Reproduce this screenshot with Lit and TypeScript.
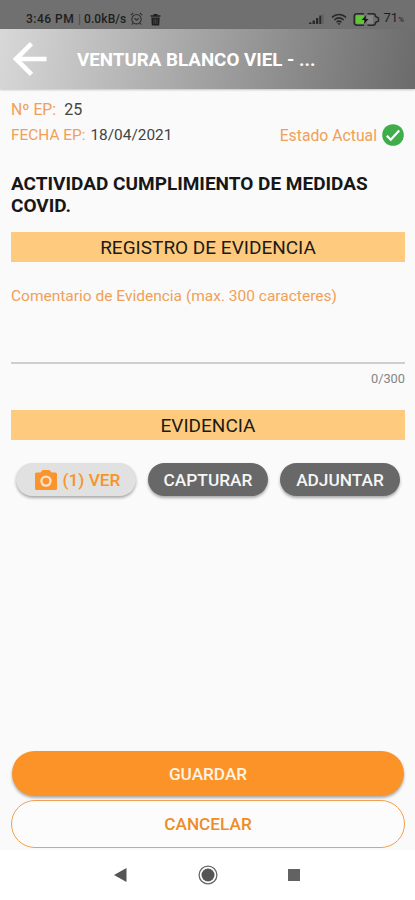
import { LitElement, html, css } from "lit";
import { customElement, property } from "lit/decorators.js";

@customElement("section-banner")
class SectionBanner extends LitElement {
  static styles = css`
    :host { display: block; height: 30px; background: #fecb7e; color: #1c1a17; text-align: center;
      font: 400 19px/31px Roboto, sans-serif; }
  `;
  render() { return html`<slot></slot>`; }
}

@customElement("pill-button")
class PillButton extends LitElement {
  @property({ reflect: true }) variant = "dark";
  static styles = css`
    :host { display: block; }
    button { display: flex; align-items: center; justify-content: center; gap: 6px; width: 100%; height: 33px;
      box-sizing: border-box; padding: 0; border: 0; border-radius: 25px; background: #686868; color: #f6f6f6;
      font: 500 17.3px/20px Roboto, sans-serif; white-space: nowrap; box-shadow: 0 2px 3px rgba(0,0,0,.32); }
    :host([variant="light"]) button { background: #e1e1e1; color: #f7942a; padding-left: 3px; }
    :host([variant="primary"]) button { height: 45px; background: #fc9328; color: #fff3e2; font-size: 17.2px; }
    :host([variant="outline"]) button { height: 48px; background: #fcfcfc; color: #ec8d2b; font-size: 17.2px;
      border: 1px solid #f0a050; box-shadow: none; }
  `;
  render() { return html`<button><slot></slot></button>`; }
}

@customElement("app-root")
class AppRoot extends LitElement {
  static styles = css`
    :host { display: flex; flex-direction: column; width: 415px; height: 900px; background: #fafafa;
      font-family: Roboto, sans-serif; color: #444; overflow: hidden; }
    svg { display: block; flex: none; }
    .status { display: flex; align-items: center; height: 29px; box-sizing: border-box; padding: 9px 11px 0 26px;
      background: #707070; color: #1e1e1e; font-size: 12px; font-weight: 500; line-height: 20px; white-space: pre; }
    .time { width: 50px; letter-spacing: .5px; }
    .bar { width: 7px; color: #484848; text-align: center; font-weight: 400; }
    .speed { width: 43px; margin-left: 1px; letter-spacing: .1px; }
    .alarm { margin-left: 3px; }
    .trash { margin-left: 7px; }
    .signal { margin-left: auto; }
    .wifi { margin-left: 7px; }
    .battery { margin-left: 6px; }
    .percent { margin-left: 4px; font-weight: 400; font-size: 13px; }
    .percent small { font-size: 8px; }
    .header { display: flex; align-items: center; height: 60px; box-sizing: border-box; padding-left: 12px;
      background: linear-gradient(99deg, #d8d8d8 0%, #6b6b6b 100%); box-shadow: 0 1px 2px rgba(0,0,0,.22); z-index: 1; }
    h1 { margin: 1px 0 0 30px; color: #fff; font-size: 18.75px; line-height: 24px; font-weight: 700; }
    main { flex: 1; display: flex; flex-direction: column; padding: 7px 10px 0 11px; }
    .row { display: flex; align-items: center; height: 26px; font-size: 15.4px; white-space: pre; }
    .label { color: #f0a057; }
    .number { margin-left: 8px; font-size: 16px; }
    .date { margin-left: 5px; }
    .first .label { font-size: 15.8px; }
    .state { margin-left: auto; font-size: 15.75px; }
    .ok { margin: 0 1px 0 5px; }
    h2 { margin: 25px 0 15px; color: #171717; font-size: 19px; line-height: 22px; font-weight: 700; }
    .comment { height: 102px; box-sizing: border-box; padding-top: 24px; border-bottom: 2px solid #cfcfcf;
      font-size: 15.5px; line-height: 20px; }
    .counter { height: 46px; box-sizing: border-box; padding-top: 6px; text-align: right; font-size: 12.8px;
      line-height: 18px; color: #858585; }
    .buttons { display: grid; grid-template-columns: repeat(3, 120px); gap: 12px; margin: 23px 0 0 5px; }
    .actions { margin-top: auto; display: grid; gap: 4px; padding-bottom: 2px; }
    .save { margin: 0 1px; }
    nav { display: flex; height: 50px; align-items: center; background: #fff; padding-left: 113px; }
    .home { margin-left: 70px; }
    .recent { margin-left: 69px; }
  `;

  render() {
    return html`
      <div class="status">
        <span class="time">3:46 PM</span><span class="bar">|</span><span class="speed">0.0kB/s</span>
        <svg class="alarm" width="13" height="14" viewBox="0 0 13 14" fill="none" stroke="#303030" stroke-width="1.1">
          <circle cx="6.5" cy="7.2" r="4.7"/><path d="M.8 3.2 3.2 1M12.2 3.2 9.8 1M4.4 6.2l2.1 2 2.3-2M3 11l-1.2 1.6M10 11l1.2 1.6"/>
        </svg>
        <svg class="trash" width="11" height="13" viewBox="0 0 11 13">
          <path d="M3.5 1h4v1.2h3v1.600H.5V2.200h3zM1.300 4.500h8.400l-.5 8H1.800z" fill="#202020"/>
          <path d="M3.900 5.700v5.300M5.500 5.700v5.300M7.100 5.700v5.300" stroke="#555" stroke-width=".6"/>
        </svg>
        <svg class="signal" width="15" height="12" viewBox="0 0 15 12" fill="#292929">
          <path d="M0 9.500h2.500V11H0zM3.500 7.500H6V11H3.500zM7 5h2.300v6H7zM10.300 2.500h2V11h-2z"/><path d="M13.300 1h1.200v10h-1.200z" fill="#5c5c5c"/>
        </svg>
        <svg class="wifi" width="16" height="13" viewBox="0 0 16 13" fill="none" stroke="#292929" stroke-width="1.500">
          <path d="M1 4.500c4-4 10-4 14 0M3.300 7c3-2.700 6.400-2.700 9.400 0M5.500 9.200c1.600-1.400 3.400-1.400 5 0"/><path d="M6.300 10.200h3.400L8 12.200z" fill="#292929" stroke="none"/>
        </svg>
        <svg class="battery" width="27" height="13" viewBox="0 0 27 13">
          <path d="M3 2.200h8v8.600H3z" fill="#63c53a"/><path d="M14 2.200h6v8.600h-6z" fill="#858585"/>
          <path d="M11 .8H4Q1.200.8 1.200 3.500v6q0 2.700 2.800 2.700h7M14.500.8H20q2.500 0 2.500 2.700L25.500 5v3l-3 1.500q0 2.700-2.500 2.700h-5.500" fill="none" stroke="#292929" stroke-width="1.500"/>
          <path d="M13 2.500 8.500 7h3l-.6 3.800L15.700 6H12.600z" fill="#171717"/>
        </svg>
        <span class="percent">71<small>%</small></span>
      </div>
      <header class="header">
        <svg width="35" height="36" viewBox="0 0 35 36" fill="none" stroke="#fff" stroke-width="4.600"><path d="M34.500 18H4M19.500 2.700 4 18l15.500 15.300"/></svg>
        <h1>VENTURA BLANCO VIEL - ...</h1>
      </header>
      <main>
        <div class="row first"><span class="label">Nº EP:</span><span class="number">25</span></div>
        <div class="row"><span class="label">FECHA EP:</span><span class="date">18/04/2021</span>
          <span class="label state">Estado Actual</span>
          <svg class="ok" width="22" height="22" viewBox="0 0 22 22"><circle cx="11" cy="11" r="10.800" fill="#3dae49"/><path d="m4.800 11.700 4 4 8.400-9.200" fill="none" stroke="#fff" stroke-width="2.300"/></svg>
        </div>
        <h2>ACTIVIDAD CUMPLIMIENTO DE MEDIDAS COVID.</h2>
        <section-banner>REGISTRO DE EVIDENCIA</section-banner>
        <div class="comment"><span class="label">Comentario de Evidencia (max. 300 caracteres)</span></div>
        <div class="counter">0/300</div>
        <section-banner>EVIDENCIA</section-banner>
        <div class="buttons">
          <pill-button variant="light">
            <svg width="22" height="20" viewBox="0 0 22 20"><path fill="#fb942c" d="M7.500 0h7l2 2.500H20.500q1.500 0 1.500 1.500V18.500q0 1.500-1.500 1.500H1.500q-1.500 0-1.500-1.500V4q0-1.500 1.500-1.500h4z"/><circle cx="11" cy="11.100" r="5.700" fill="#f5e3cd"/><circle cx="11" cy="11.100" r="3.400" fill="#fb942c"/></svg>
            <span>(1) VER</span>
          </pill-button>
          <pill-button>CAPTURAR</pill-button>
          <pill-button>ADJUNTAR</pill-button>
        </div>
        <div class="actions">
          <pill-button class="save" variant="primary">GUARDAR</pill-button>
          <pill-button variant="outline">CANCELAR</pill-button>
        </div>
      </main>
      <nav>
        <svg width="15" height="16" viewBox="0 0 15 16"><path d="M1 8 13.500 1v14z" fill="#555"/></svg>
        <svg class="home" width="20" height="20" viewBox="0 0 20 20"><circle cx="10" cy="10" r="8.900" fill="#fff" stroke="#666" stroke-width="1.300"/><circle cx="10" cy="10" r="6.500" fill="#555"/></svg>
        <svg class="recent" width="14" height="14" viewBox="0 0 14 14"><path d="M1 1h12v12H1z" fill="#626262"/></svg>
      </nav>`;
  }
}
